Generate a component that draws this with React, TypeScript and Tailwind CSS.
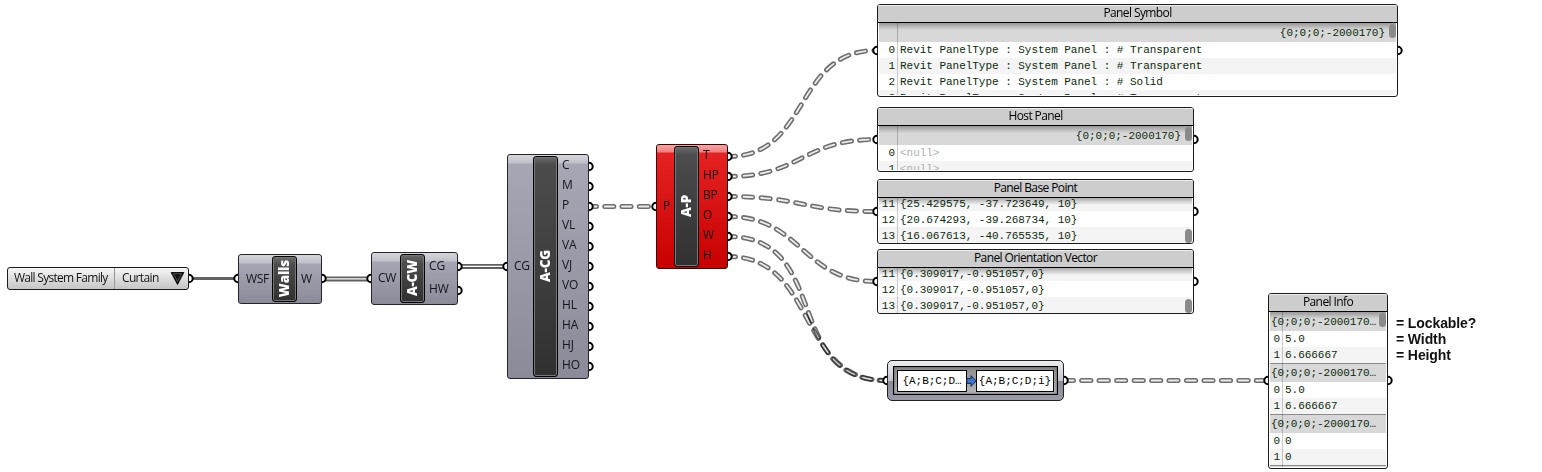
import React from "react";

const UI = "font-['Open_Sans','Noto_Sans',sans-serif] whitespace-nowrap text-[12px] leading-[16px]";
const MONO = "font-['Liberation_Mono',monospace] whitespace-pre text-[11px] leading-[16px] tracking-[-0.03px]";

type Wire = { x1: number; y1: number; x2: number; y2: number; k?: number };

const dashedWires: Wire[] = [
  { x1: 589, y1: 206.5, x2: 654, y2: 206.5 },
  { x1: 728, y1: 156.5, x2: 876, y2: 50.5, k: 0.56 },
  { x1: 728, y1: 176.5, x2: 876, y2: 139.5 },
  { x1: 728, y1: 196.5, x2: 876, y2: 211.5 },
  { x1: 728, y1: 216.5, x2: 876, y2: 281.5 },
  { x1: 728, y1: 236.5, x2: 886, y2: 380.5, k: 0.66 },
  { x1: 728, y1: 256.5, x2: 886, y2: 380.5, k: 0.57 },
  { x1: 1066, y1: 380.5, x2: 1266, y2: 380.5 },
];

const grips: [number, number][] = [
  [189, 278.5], [238, 278.5], [322, 278.5], [371, 278.5],
  [458, 266.5], [458, 290.5], [507, 266.5],
  ...Array.from({ length: 11 }, (_, i): [number, number] => [589, 166.5 + i * 20]),
  [656, 206.5],
  ...Array.from({ length: 6 }, (_, i): [number, number] => [728, 156.5 + i * 20]),
  [877, 50.5], [1398, 50.5], [877, 139.5], [1194, 139.5],
  [877, 211.5], [1194, 211.5], [877, 281.5], [1194, 281.5],
  [887, 380.5], [1064, 380.5], [1268, 380.5], [1388, 380.5],
];

function Wires() {
  return (
    <svg className="absolute inset-0" width="1542" height="472" fill="none">
      <path d="M189 278.5H238" stroke="#636363" strokeWidth="3" />
      {["M322 278.9H371", "M458 266.4H507"].map((d) => (
        <g key={d}>
          <path d={d} stroke="#606060" strokeWidth="5" />
          <path d={d} stroke="#fff" strokeWidth="1.4" />
        </g>
      ))}
      {dashedWires.map((w, i) => {
        const reach = (w.x2 - w.x1) * (w.k ?? 0.5);
        const d = `M${w.x1} ${w.y1}C${w.x1 + reach} ${w.y1} ${w.x2 - reach} ${w.y2} ${w.x2} ${w.y2}`;
        return (
          <g key={i} className="mix-blend-multiply" strokeLinecap="round" strokeDasharray="9.2 8.3" strokeDashoffset="2">
            <path d={d} stroke="#6e6e6e" strokeWidth="5" />
            <path d={d} stroke="#ececec" strokeWidth="1.8" />
          </g>
        );
      })}
      {grips.map(([x, y], i) => (
        <circle key={i} cx={x} cy={y} r="3.7" fill="#fff" stroke="#000" strokeWidth="2" />
      ))}
    </svg>
  );
}

interface NodeProps {
  box: string;
  name: string;
  inputs: string[];
  outputs: string[];
  red?: boolean;
  rowClass: string;
  inClass: string;
  outClass: string;
}

function Component({ box, name, inputs, outputs, red, rowClass, inClass, outClass }: NodeProps) {
  return (
    <div
      className={`absolute flex overflow-hidden rounded-[3px] border py-px ${box} ${
        red
          ? "border-[#3a0000] bg-[linear-gradient(#f6a5a5_0,#ef8080_7px,#e52222_8px,#c80000_100%)]"
          : "border-[#24242a] bg-[linear-gradient(#d6d6da_0,#c0c0cb_8px,#a6a6b5_9px,#8a8a98_100%)]"
      }`}
    >
      <div className={`flex flex-col justify-center tracking-[-0.3px] ${UI} text-[#14141c] ${inClass}`}>
        {inputs.map((t) => (
          <span key={t}>{t}</span>
        ))}
      </div>
      <div className="flex w-[25px] shrink-0 items-center justify-center rounded-[3px] border border-black bg-[linear-gradient(#6a6a6a_0,#4c4c4c_8px,#303030_100%)] shadow-[inset_0_0_0_1px_#777]">
        <span className="mr-px rotate-180 whitespace-nowrap font-['Open_Sans',sans-serif] text-[13.5px] font-extrabold leading-[20px] tracking-[-0.2px] text-white [writing-mode:vertical-rl]">
          {name}
        </span>
      </div>
      <div className={`flex flex-col tracking-[-0.15px] ${UI} text-[#14141c] ${outClass}`}>
        {outputs.map((t) => (
          <span key={t} className={rowClass}>
            {t}
          </span>
        ))}
      </div>
    </div>
  );
}

type Row =
  | { kind: "path"; text: string; line?: boolean }
  | { kind: "item"; n: string; text: string; alt?: boolean; muted?: boolean };

interface PanelProps {
  box: string;
  title: string;
  rows: Row[];
  thumb: string;
  narrow?: boolean;
  end?: boolean;
}

function Panel({ box, title, rows, thumb, narrow, end }: PanelProps) {
  return (
    <div className={`absolute flex flex-col overflow-hidden rounded-[3px] border border-[#1c1c1c] bg-white ${box}`}>
      <div className={`flex h-[18px] shrink-0 justify-center border-b border-black bg-[#cdcdcd] tracking-[-0.6px] shadow-[inset_0_1px_0_#eee] ${UI} leading-[15px] text-black`}>
        {title}
      </div>
      <div className={`relative mx-px flex min-h-0 flex-1 flex-col overflow-hidden ${end ? "justify-end" : "mb-px"}`}>
        {rows.map((r, i) =>
          r.kind === "path" ? (
            <div
              key={i}
              className={`flex shrink-0 bg-[#d8d8d8] ${MONO} text-[#0b2a0b] ${
                narrow ? "pl-px" : "justify-end pr-[11px]"
              } ${r.line ? "h-[19px] border-t border-[#8c8c8c] pt-px" : "h-[18.5px] pt-[2px]"}`}
            >
              {r.text}
            </div>
          ) : (
            <div key={i} className={`flex h-[16px] shrink-0 ${MONO} ${end ? "pt-px" : ""} ${r.alt ? "bg-[#f4f4f4]" : "bg-white"}`}>
              <span className={`text-right text-[#0b2a0b] ${narrow ? "w-[10px]" : "w-[16px]"}`}>{r.n}</span>
              <span className={`pl-[5px] ${r.muted ? "text-[#b0b0b0]" : "text-[#0b2a0b]"}`}>{r.text}</span>
            </div>
          ),
        )}
        <div className={`absolute inset-y-0 w-px bg-black/20 ${narrow ? "left-[12px]" : "left-[18px]"}`} />
        <div className="absolute inset-x-0 top-0 h-[7px] bg-linear-to-b from-black/30 to-transparent" />
        <div className={`absolute right-0 h-[14px] w-[7px] rounded-[3.5px] bg-[#8a8a8a] ${thumb}`} />
      </div>
    </div>
  );
}

const item = (n: string, text: string, alt = false, muted = false): Row => ({ kind: "item", n, text, alt, muted });

export default function App() {
  return (
    <div className="relative h-[472px] w-[1542px] overflow-hidden bg-white">
      <Wires />

      <div className={`absolute left-[7px] top-[267px] flex h-[23px] w-[182px] rounded-[3px] border border-[#1c1c1c] bg-linear-to-b from-[#f6f6f6] to-[#c6c6c6] text-[#141414] ${UI}`}>
        <div className="w-[107px] border-r border-[#999] pl-[6px] pt-[2px] tracking-[-0.72px]">Wall System Family</div>
        <div className="flex flex-1 justify-between pl-[7px] pr-[3px] pt-[2px] tracking-[-0.65px]">
          Curtain
          <svg width="15" height="15" viewBox="0 0 15 15" className="mt-[1px]">
            <path d="M1.2 1.5H13.8L7.5 13.5Z" fill="#111" stroke="#111" />
            <path d="M3.6 2.7H11.4L7.5 10.4Z" fill="none" stroke="#777" strokeWidth=".6" />
          </svg>
        </div>
      </div>

      <Component box="left-[238px] top-[254px] h-[50px] w-[84px]" name="Walls" inputs={["WSF"]} outputs={["W"]} rowClass="" inClass="w-[33px] pl-[7px] pb-px" outClass="justify-center pl-[4px] pb-px" />
      <Component box="left-[371px] top-[252px] h-[53px] w-[87px]" name="A-CW" inputs={["CW"]} outputs={["CG", "HW"]} rowClass="h-[24px]" inClass="w-[28px] pl-[6px] pb-[2px]" outClass="pl-[4px] pt-[4px]" />
      <Component box="left-[507px] top-[154px] h-[225px] w-[82px]" name="A-CG" inputs={["CG"]} outputs={["C", "M", "P", "VL", "VA", "VJ", "VO", "HL", "HA", "HJ", "HO"]} rowClass="h-[20px] shrink-0" inClass="w-[25px] pl-[6px] pb-[2px]" outClass="pl-[4px] pt-px" />
      <Component red box="left-[656px] top-[144px] h-[125px] w-[72px]" name="A-P" inputs={["P"]} outputs={["T", "HP", "BP", "O", "W", "H"]} rowClass="h-[20px] shrink-0" inClass="w-[17px] pl-[6px] pb-[2px]" outClass="pl-[4px] pt-px" />

      <Panel
        box="left-[877px] top-[4px] h-[93px] w-[521px]"
        title="Panel Symbol"
        thumb="top-[1px]"
        rows={[
          { kind: "path", text: "{0;0;0;-2000170}" },
          item("0", "Revit PanelType : System Panel : # Transparent"),
          item("1", "Revit PanelType : System Panel : # Transparent", true),
          item("2", "Revit PanelType : System Panel : # Solid"),
          item("3", "Revit PanelType : System Panel : # Transparent", true),
        ]}
      />
      <Panel
        box="left-[877px] top-[107px] h-[65px] w-[317px]"
        title="Host Panel"
        thumb="top-[1px]"
        rows={[{ kind: "path", text: "{0;0;0;-2000170}" }, item("0", "<null>", false, true), item("1", "<null>", true, true)]}
      />
      <Panel
        end
        box="left-[877px] top-[179px] h-[65px] w-[317px]"
        title="Panel Base Point"
        thumb="bottom-0"
        rows={[
          item("11", "{25.429575, -37.723649, 10}", true),
          item("12", "{20.674293, -39.268734, 10}"),
          item("13", "{16.067613, -40.765535, 10}", true),
        ]}
      />
      <Panel
        end
        box="left-[877px] top-[249px] h-[65px] w-[317px]"
        title="Panel Orientation Vector"
        thumb="bottom-0"
        rows={[
          item("11", "{0.309017,-0.951057,0}", true),
          item("12", "{0.309017,-0.951057,0}"),
          item("13", "{0.309017,-0.951057,0}", true),
        ]}
      />
      <Panel
        narrow
        box="left-[1268px] top-[293px] h-[176px] w-[120px]"
        title="Panel Info"
        thumb="top-[1px]"
        rows={[
          { kind: "path", text: "{0;0;0;-2000170…" },
          item("0", "5.0"),
          item("1", "6.666667", true),
          { kind: "path", text: "{0;0;0;-2000170…", line: true },
          item("0", "5.0"),
          item("1", "6.666667", true),
          { kind: "path", text: "{0;0;0;-2000170…", line: true },
          item("0", "0"),
          item("1", "0", true),
          { kind: "path", text: "", line: true },
        ]}
      />

      <div className="absolute left-[887px] top-[360px] h-[41px] w-[177px] rounded-[5px] border border-[#222] bg-[linear-gradient(#ededf0_0,#c4c4cc_50%,#8c8c9a_51%,#9a9aa8_100%)] p-[5px]">
        <div className="flex h-full items-center border border-black bg-[linear-gradient(#8c8c8c,#b8b8b8)] pl-[3px] pr-[3px] shadow-[inset_0_0_3px_#555]">
          <div className={`flex h-[22px] w-[70px] items-center justify-center border border-black bg-white text-black ${MONO}`}>{"{A;B;C;D…"}</div>
          <svg width="9" height="14" viewBox="0 0 9 14" className="overflow-visible">
            <path d="M-.2 4.6H4V1.6L9.2 7L4 12.4V9.4H-.2Z" fill="#3f74cc" stroke="#12294f" strokeWidth="1" />
          </svg>
          <div className={`flex h-[22px] flex-1 items-center justify-center border border-black bg-white text-black ${MONO}`}>{"{A;B;C;D;i}"}</div>
        </div>
      </div>

      <div className="absolute left-[1396px] top-[315px] flex flex-col whitespace-nowrap font-['Liberation_Sans',sans-serif] text-[14px] font-bold leading-[16px] tracking-[-0.1px] text-[#111]">
        <span>= Lockable?</span>
        <span>= Width</span>
        <span>= Height</span>
      </div>
    </div>
  );
}
